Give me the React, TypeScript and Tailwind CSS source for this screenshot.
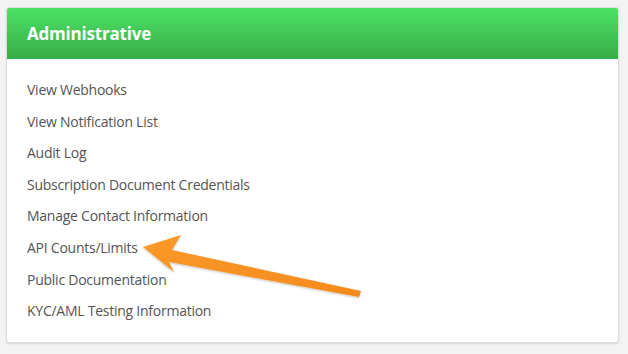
const links = [
  "View Webhooks",
  "View Notification List",
  "Audit Log",
  "Subscription Document Credentials",
  "Manage Contact Information",
  "API Counts/Limits",
  "Public Documentation",
  "KYC/AML Testing Information",
];

function Arrow() {
  return (
    <svg
      className="pointer-events-none absolute left-0 top-0"
      width="628"
      height="354"
      viewBox="0 0 628 354"
    >
      <defs>
        <linearGradient id="arrowFill" x1="0" y1="0" x2="1" y2="1">
          <stop offset="0" stopColor="#f99a2a" />
          <stop offset="1" stopColor="#f58a1c" />
        </linearGradient>
        <filter id="arrowShadow" x="-10%" y="-30%" width="120%" height="160%">
          <feDropShadow dx="0" dy="1" stdDeviation="1.2" floodColor="#000" floodOpacity="0.25" />
        </filter>
      </defs>
      <polygon
        points="143,247 181,235 172,250 361,291 359,297 169,262 174,272"
        fill="url(#arrowFill)"
        filter="url(#arrowShadow)"
      />
    </svg>
  );
}

export default function App() {
  return (
    <div className="relative h-[354px] w-[628px] bg-[#f3f3f3] pt-[7px] pl-[6px] font-['Open_Sans',sans-serif]">
      <div className="w-[613px] overflow-hidden rounded-[3px] border border-[#dcdcdc] bg-white shadow-[0_1px_2px_rgba(0,0,0,0.12)]">
        <div className="flex h-[51px] items-center bg-gradient-to-b from-[#4ce265] to-[#38ac48] pl-[20px]">
          <h2 className="text-[17px] font-bold tracking-[-0.2px] text-white">Administrative</h2>
        </div>
        <ul className="flex flex-col pt-[20px] pb-[10px] pl-[20px]">
          {links.map((l) => (
            <li key={l} className="h-[31.6px] text-[14px] leading-[22px] tracking-[-0.25px] text-[#545454]">
              {l}
            </li>
          ))}
        </ul>
      </div>
      <Arrow />
    </div>
  );
}
